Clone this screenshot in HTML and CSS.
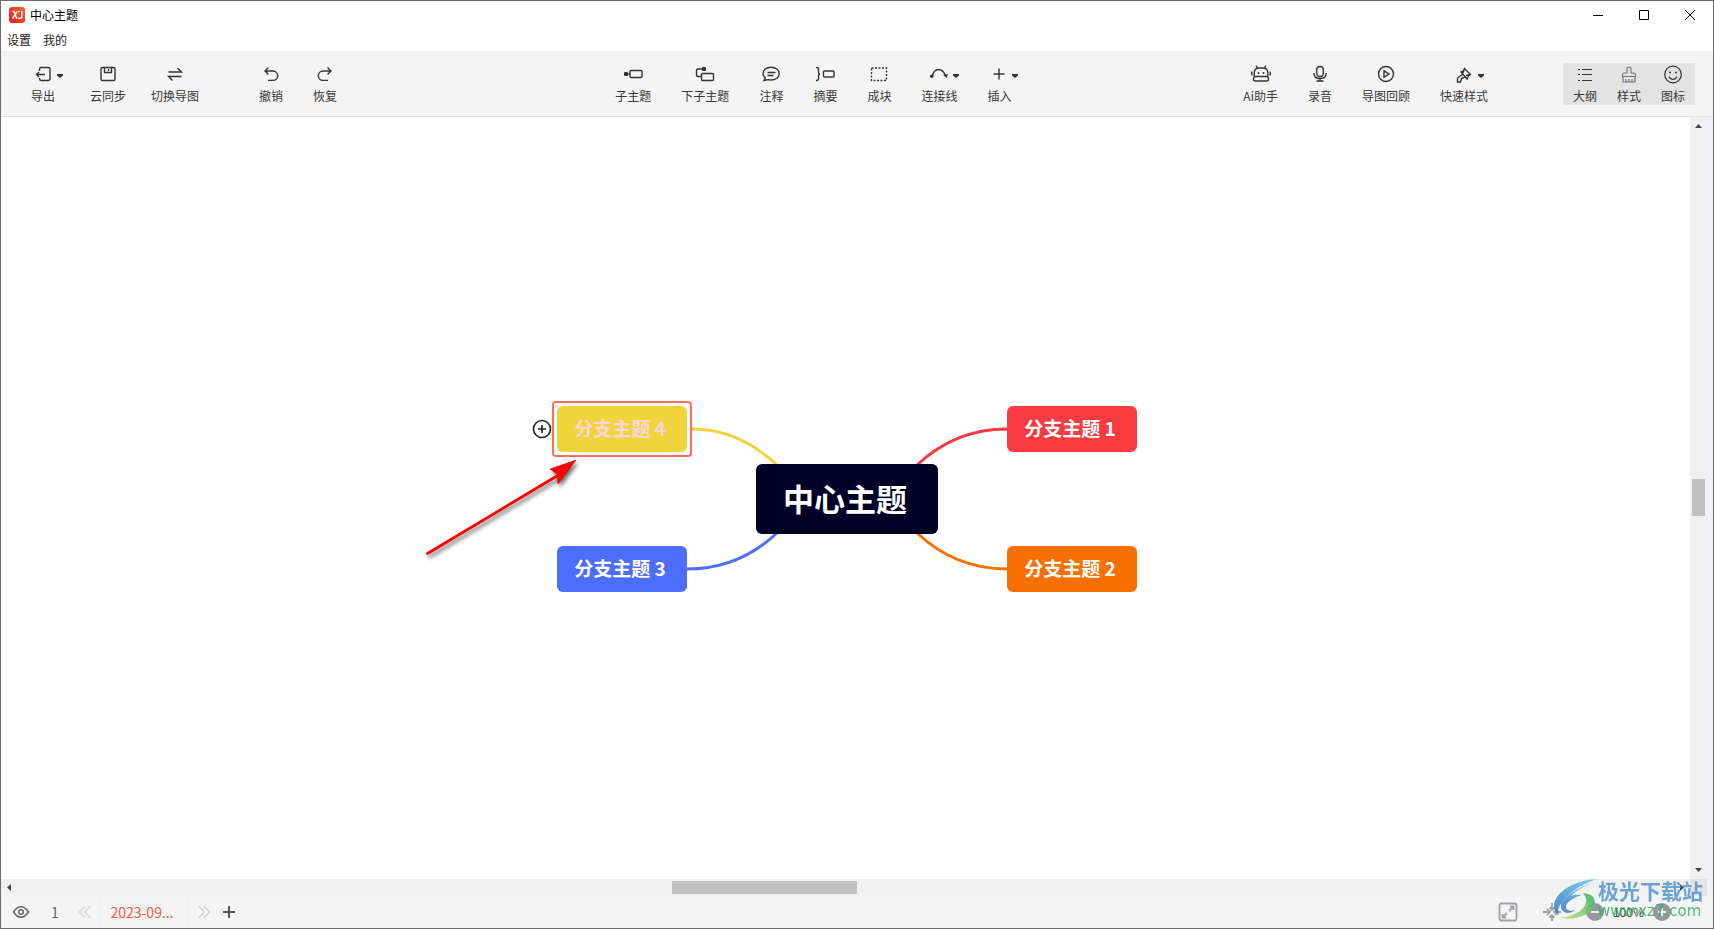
FILE: index.html
```html
<!DOCTYPE html>
<html lang="zh-CN">
<head>
<meta charset="utf-8">
<title>中心主题</title>
<link rel="stylesheet" href="styles.css">
</head>
<body>
<div class="window">
  <header class="titlebar">
    <svg class="logo" viewBox="0 0 16 16"><defs><linearGradient id="lg" x1="0" y1="1" x2="1" y2="0"><stop offset="0" stop-color="#f5141c"/><stop offset="1" stop-color="#f8672c"/></linearGradient></defs><rect width="16" height="16" rx="3" fill="url(#lg)"/><path d="M3.500 4.500h1.500l2.500 6.500h1M8 4.500L3.500 11.500M9 4.500h1.500M12.800 4v5.500q0 2-2.300 2H9" fill="none" stroke="#fff" stroke-width="1.500"/></svg>
    <h1 class="title">中心主题</h1>
    <div class="window-buttons">
      <button class="winbtn" aria-label="最小化"><svg viewBox="0 0 12 12"><path d="M1 6.500h10"/></svg></button>
      <button class="winbtn" aria-label="最大化"><svg viewBox="0 0 12 12"><path d="M1.500 1.500h9v9h-9z"/></svg></button>
      <button class="winbtn" aria-label="关闭"><svg viewBox="0 0 12 12"><path d="M1 1l10 10M11 1L1 11"/></svg></button>
    </div>
  </header>
  <nav class="menubar"><button>设置</button><button>我的</button></nav>

  <div class="toolbar">
    <div class="group file">
      <button class="tool export"><svg viewBox="0 0 20 20"><path d="M6.500 7V5.200Q6.500 3.500 8.200 3.500h7.100Q17 3.500 17 5.200v9.600q0 1.700-1.700 1.700H8.200q-1.700 0-1.700-1.700V14M12 10.500H3.500M6 8l-2.500 2.500L6 13"/><path class="solid" d="M24 10h6v1.500l-3 2.500-3-2.500z"/></svg><span>导出</span></button>
      <button class="tool"><svg viewBox="0 0 20 20"><rect x="3" y="3.500" width="14" height="13" rx="1.500"/><path d="M6.500 4v4.500h7V4M10.500 5v2"/></svg><span>云同步</span></button>
      <button class="tool"><svg viewBox="0 0 20 20"><path d="M3.500 8H16.500L12.500 4M16.500 12.500H3.500l4 4"/></svg><span>切换导图</span></button>
    </div>
    <div class="group history">
      <button class="tool"><svg viewBox="0 0 20 20"><path d="M7.500 3.500L4 7l3.500 3.500M4.500 7H12a4.700 4.700 0 0 1 0 9.400H7"/></svg><span>撤销</span></button>
      <button class="tool"><svg viewBox="0 0 20 20"><path d="M12.500 3.500L16 7l-3.500 3.500M15.500 7H8a4.700 4.700 0 0 0 0 9.400h5"/></svg><span>恢复</span></button>
    </div>
    <div class="space wide"></div>
    <div class="group">
      <button class="tool"><svg viewBox="0 0 20 20"><rect x="7" y="6.500" width="12" height="7" rx="1"/><path d="M2 10h5"/><rect class="solid" x="1" y="8" width="4" height="4" rx="1"/></svg><span>子主题</span></button>
      <button class="tool"><svg viewBox="0 0 20 20"><rect x="6.500" y="9.500" width="12" height="7" rx="1"/><path d="M6 12.500H3Q1.500 12.500 1.500 11V6.500Q1.500 5 3 5h6"/><rect class="solid" x="7" y="3" width="4" height="4" rx="1"/></svg><span>下子主题</span></button>
      <button class="tool"><svg viewBox="0 0 20 20"><path d="M3 16.500l1.200-2.600Q2 12 2 9.700C2 6 5.400 3.200 10 3.200S18.200 6 18.200 9.700 14.800 16 10 16q-1.500 0-3-.4z M6.500 8.500h8M6.500 11.500h6"/></svg><span>注释</span></button>
      <button class="tool"><svg viewBox="0 0 20 20"><path d="M1 3.500h.5Q3.500 3.500 3.500 5.200v2.600Q3.500 10 5 10 3.500 10 3.500 12.200v2.600Q3.500 16.500 1.500 16.500H1"/><rect x="8.500" y="7" width="10.500" height="6" rx="1"/></svg><span>摘要</span></button>
      <button class="tool"><svg viewBox="0 0 20 20"><rect x="2.500" y="4" width="15" height="12.500" stroke-dasharray="2 1.500"/></svg><span>成块</span></button>
      <button class="tool"><svg viewBox="0 0 20 20"><path d="M3 12.500Q5 5.500 9.500 5.500T16.500 11.500"/><circle class="solid" cx="2.800" cy="12.200" r="1.800"/><path class="solid" d="M14.200 11l4.600-1-1 4z"/><path class="solid" d="M24 10h6v1.500l-3 2.500-3-2.500z"/></svg><span>连接线</span></button>
      <button class="tool"><svg viewBox="0 0 20 20"><path d="M10 4.500v11M4.500 10h11"/><path class="solid" d="M23 10h6v1.500l-3 2.500-3-2.500z"/></svg><span>插入</span></button>
    </div>
    <div class="space"></div>
    <div class="group">
      <button class="tool"><svg viewBox="0 0 20 20"><path d="M5 1.500l1.500 2.500M15 1.500L13.500 4M3.200 12V9Q3.200 4 8 4h4q4.800 0 4.800 5v3M.8 7.500v4M19.200 7.500v4"/><rect x="2.500" y="12.500" width="15" height="4.500" rx="2"/><circle class="solid" cx="7.500" cy="9" r="1"/><circle class="solid" cx="12.500" cy="9" r="1"/></svg><span>Ai助手</span></button>
      <button class="tool"><svg viewBox="0 0 20 20"><rect x="6.700" y="2.500" width="6.600" height="10" rx="3.300"/><path d="M4 9v1q0 4.500 6 4.500T16 10V9M10 14.500V17M6.500 17h7"/></svg><span>录音</span></button>
      <button class="tool"><svg viewBox="0 0 20 20"><circle cx="10" cy="10" r="7.500"/><path d="M8 6.800v6.400l5-3.200z"/></svg><span>导图回顾</span></button>
      <button class="tool"><svg viewBox="0 0 20 20"><path d="M10.500 4.500L16.500 10.500l-2 1.200-1.500 3.300-6-7 2.500-1zM7 8l6 7M10.500 4.500l-1.500 4.500M16.500 10.500l-4.500 1M8.500 10.500l-5 3.500v4h3l1-3.500 3.500-1.500"/><path class="solid" d="M24 10h6v1.500l-3 2.500-3-2.500z"/></svg><span>快速样式</span></button>
    </div>
    <div class="panels">
      <button class="tool thin"><svg viewBox="0 0 20 20"><path d="M7 5.500h10M7 10.500h10M7 16.500h10M3 5.500h2M3 10.500h2M3 16.500h2"/></svg><span>大纲</span></button>
      <button class="tool thin pale"><svg viewBox="0 0 20 20"><path d="M8 9V5q0-2 2-2t2 2v4M8 9H5Q3.500 9 3.500 11v1.500h13V11q0-2-1.500-2h-3M4 12.500v5.500h12v-5.500M7 18v-3M10 18v-3M13 18v-3"/></svg><span>样式</span></button>
      <button class="tool thin"><svg viewBox="0 0 20 20"><circle cx="10" cy="10.500" r="8.300"/><path d="M6 12.500q1.500 3 4 3t4-3"/><circle class="solid" cx="7" cy="8.500" r="1"/><circle class="solid" cx="13" cy="8.500" r="1"/></svg><span>图标</span></button>
    </div>
  </div>

  <main class="workspace">
    <div class="canvas">
      <div class="map">
        <svg class="links" viewBox="0 0 580 186">
          <path stroke="#f1d43c" d="M135 23C168 23 197 37 221 60"/>
          <path stroke="#4d6dff" d="M130 163C168 163 197 149 221 126"/>
          <path stroke="#f73b40" d="M450 23C412 23 383 37 359 60"/>
          <path stroke="#f87000" d="M450 163C412 163 383 149 359 126"/>
        </svg>
        <div class="node root">中心主题</div>
        <div class="node branch one">分支主题 1</div>
        <div class="node branch two">分支主题 2</div>
        <div class="node branch three">分支主题 3</div>
        <div class="node branch four selected">分支主题 4</div>
        <button class="add" aria-label="添加主题"><svg viewBox="0 0 20 20"><circle cx="10" cy="10" r="8.500"/><path d="M10 6v8M6 10h8"/></svg></button>
        <svg class="pointer" viewBox="0 0 160 106"><path d="M6.500 98.500L135 21.500" stroke="#f00" stroke-width="2.800" stroke-linecap="round"/><path d="M155 5L129 14l7 5 1 10z" fill="#f00" stroke="#a00" stroke-width=".5"/></svg>
      </div>
    </div>
    <div class="vscroll">
      <svg viewBox="0 0 17 17"><path d="M5 11h7L8.500 7z"/></svg>
      <div class="vtrack"><div class="vthumb"></div></div>
      <svg viewBox="0 0 17 17"><path d="M5 6h7L8.500 10z"/></svg>
    </div>
    <div class="hscroll">
      <svg viewBox="0 0 17 17"><path d="M10 5v7L6 8.500z"/></svg>
      <div class="htrack"><div class="hthumb"></div></div>
      <svg viewBox="0 0 17 17"><path d="M7 5v7l4-3.500z"/></svg>
    </div>
    <div class="corner"></div>
  </main>

  <footer class="status">
    <button class="eye" aria-label="预览"><svg width="18" height="18" viewBox="0 0 18 18"><path d="M1.500 9Q5 3.800 9 3.800T16.500 9Q13 14.200 9 14.200T1.500 9z"/><circle cx="9" cy="9" r="2.300"/></svg></button>
    <span class="page">1</span>
    <button class="pale-arrow" aria-label="上一页"><svg width="14" height="14" viewBox="0 0 14 14"><path d="M7 1L1.500 7 7 13M12.500 1L7 7l5.500 6"/></svg></button>
    <button class="tab">2023-09...</button>
    <button class="pale-arrow next" aria-label="下一页"><svg width="14" height="14" viewBox="0 0 14 14"><path d="M1.500 1L7 7l-5.500 6M7 1l5.500 6L7 13"/></svg></button>
    <button class="new" aria-label="新建"><svg width="14" height="14" viewBox="0 0 14 14"><path d="M7 1v12M1 7h12"/></svg></button>
    <div class="zoom">
      <button aria-label="全屏"><svg width="20" height="20" viewBox="0 0 20 20"><rect x="1.500" y="1.500" width="17" height="17" rx="1.500"/><path d="M11 9l4.500-4.500M12 4.500h3.500V8M9 11l-4.500 4.500M4.500 12v3.500H8"/></svg></button>
      <button aria-label="居中"><svg width="20" height="20" viewBox="0 0 20 20"><path d="M1 10h7M5 7l3 3-3 3M19 10h-7M15 7l-3 3 3 3M10 1v7M7.500 5.500L10 8l2.500-2.500M10 19v-6M7.500 15.500L10 13l2.500 2.500"/></svg></button>
      <div class="level">
        <button aria-label="缩小"><svg width="18" height="18" viewBox="0 0 18 18"><circle class="disc" cx="9" cy="9" r="9"/><path class="sign" d="M5 9h8"/></svg></button>
        <span>100%</span>
        <button aria-label="放大"><svg width="18" height="18" viewBox="0 0 18 18"><circle class="disc" cx="9" cy="9" r="9"/><path class="sign" d="M5 9h8M9 5v8"/></svg></button>
      </div>
    </div>
  </footer>

  <div class="watermark">
    <svg viewBox="0 0 44 42"><defs><linearGradient id="wb" x1="1" y1="0" x2="0" y2="1"><stop offset="0" stop-color="#69cdf2"/><stop offset="1" stop-color="#3576c5"/></linearGradient><linearGradient id="wg" x1="0" y1="1" x2="1" y2="0"><stop offset="0" stop-color="#bfe37a"/><stop offset="1" stop-color="#33ae62"/></linearGradient></defs><path fill="url(#wb)" d="M43 0C22 1 1 12 0 27q0 6 5 9-2-7 2-11Q17 9 43 0z"/><path fill="url(#wb)" d="M38 4C22 9 9 19 7 26q-1 6 6 8 5 0 8-3-7 2-9-2-1-4 5-8 6-4 11-5-7-1-11 1Q23 10 38 4z"/><path fill="url(#wg)" d="M29 14q12 1 12 9C40 35 24 42 5 39q18-2 25-11 5-7-1-14z"/></svg>
    <div class="wm-text"><span class="wm-cn">极光下载站</span><span class="wm-url">www.xz7.com</span></div>
  </div>
</div>
</body>
</html>
```

FILE: styles.css
```css
* { box-sizing: border-box; }
body {
  margin: 0;
  font: 12px/18px "Noto Sans CJK SC", sans-serif;
  color: #222;
}
button {
  padding: 0;
  border: 0;
  background: none;
  font: inherit;
  color: inherit;
}
svg { display: block; fill: none; overflow: visible; }

.window {
  position: relative;
  display: flex;
  flex-direction: column;
  height: 100vh;
  border: 1px solid #6b6b6b;
  background: #fff;
  overflow: hidden;
}

.titlebar { display: flex; align-items: center; height: 28px; padding-left: 8px; }
.logo { width: 16px; height: 16px; }
.title { margin: 0 0 0 5px; font-size: 12px; font-weight: 400; color: #000; }
.window-buttons { display: flex; margin-left: auto; }
.winbtn { display: grid; place-items: center; width: 46px; height: 28px; }
.winbtn svg { width: 12px; height: 12px; stroke: #000; }

.menubar { display: flex; align-items: center; gap: 12px; height: 22px; padding-left: 6px; }

.toolbar {
  display: flex;
  align-items: center;
  height: 66px;
  padding: 0 18px 0 30px;
  background: #f4f4f4;
  border-bottom: 1px solid #e0e0e0;
}
.group { display: flex; gap: 30px; }
.file { gap: 25px; }
.export { margin-right: 10px; }
.history { margin-left: 60px; }
.space { flex: 5; }
.space.wide { flex: 6; }
.tool {
  display: flex;
  flex-direction: column;
  align-items: center;
  gap: 3px;
  height: 42px;
  padding-top: 1px;
  white-space: nowrap;
  color: #383838;
}
.tool svg { width: 20px; height: 20px; stroke: #333; stroke-width: 1.4; }
.tool .solid { fill: #333; stroke: none; }
.panels { display: flex; margin-left: 75px; background: #e3e3e3; }
.panels .tool { width: 44px; }
.thin svg { stroke-width: 1.2; }
.pale svg { stroke: #777; }

.workspace {
  flex: 1;
  display: grid;
  grid-template-columns: 1fr 17px;
  grid-template-rows: 1fr 17px;
  min-height: 0;
  padding-right: 6px;
  background: #f0f1f6;
}
.canvas { display: grid; place-items: center; padding: 1px 0 0 3px; background: #fff; min-width: 0; }
.vscroll { display: flex; flex-direction: column; background: #f0f0f0; }
.hscroll { display: flex; background: #f0f0f0; }
.vscroll svg, .hscroll svg { width: 17px; height: 17px; fill: #444; }
.vtrack { flex: 1; display: flex; flex-direction: column; padding: 0 2px; }
.vtrack::before { content: ""; flex: 474; }
.vtrack::after { content: ""; flex: 475; }
.vthumb { flex: 51; background: #c1c1c1; }
.htrack { flex: 1; display: flex; padding: 2px 0; }
.htrack::before { content: ""; flex: 395; }
.htrack::after { content: ""; flex: 493; }
.hthumb { flex: 112; background: #c1c1c1; }
.corner { background: #e3e3e3; }

/* Mind map: nodes sit on a free canvas */
.map { position: relative; width: 580px; height: 186px; }
.links { position: absolute; inset: 0; width: 580px; height: 186px; stroke-width: 3; }
.node {
  position: absolute;
  display: grid;
  place-items: center;
  padding: 0 4px 1px 0;
  border-radius: 6px;
  color: #fff;
  font-weight: 700;
  white-space: nowrap;
}
.root { left: 199px; top: 58px; width: 182px; height: 70px; background: #000026; font-size: 31px; }
.branch { width: 130px; height: 46px; font-size: 19px; }
.one { right: 0; top: 0; background: #f73b40; }
.two { right: 0; bottom: 0; background: #f87000; }
.three { left: 0; bottom: 0; background: #4d6dff; }
.four { left: 0; top: 0; background: #f1d43c; color: #fdd5da; }
.selected::before {
  content: "";
  position: absolute;
  inset: -5px;
  border: 2px solid #ff705c;
  border-radius: 4px;
}
.add { position: absolute; left: -25px; top: 13px; }
.add svg { width: 20px; height: 20px; stroke: #222; stroke-width: 1.6; }
.pointer {
  position: absolute;
  left: -136px;
  top: 49px;
  width: 160px;
  height: 106px;
  filter: drop-shadow(2px 3px 2px rgba(0, 0, 0, 0.6));
}

.status {
  display: flex;
  align-items: center;
  height: 32px;
  background: #f4f4f4;
  color: #666;
}
.status svg { stroke: #666; stroke-width: 1.5; }
.eye { margin-left: 11px; }
.page { width: 8px; margin-left: 21px; font-size: 14px; }
.pale-arrow { margin-left: 19px; }
.pale-arrow svg { stroke: #d5d5d5; }
.tab {
  align-self: stretch;
  width: 90px;
  margin-left: 7px;
  padding-right: 4px;
  border: solid #ececec;
  border-width: 0 1px;
  color: #ff5a3c;
  font-size: 14px;
}
.next { margin-left: 8px; }
.new { margin-left: 11px; }
.new svg { stroke: #555; stroke-width: 2; }
.zoom { display: flex; align-items: center; gap: 24px; margin-right: 42px; margin-left: auto; }
.zoom svg { stroke: #a0a2a8; stroke-width: 1.8; }
.level { display: flex; align-items: center; gap: 9px; color: #444; }
.zoom .disc { fill: #97999f; stroke: none; }
.zoom .sign { stroke: #f4f4f4; }

.watermark {
  position: absolute;
  right: 10px;
  bottom: 7px;
  display: flex;
  pointer-events: none;
  opacity: 0.85;
}
.watermark svg { width: 44px; height: 42px; }
.wm-text { display: flex; flex-direction: column; }
.wm-cn { font-size: 21px; line-height: 22px; font-weight: 700; color: #5596d2; }
.wm-url { font: 15px/20px "DejaVu Sans", sans-serif; color: #34b062; }
```
